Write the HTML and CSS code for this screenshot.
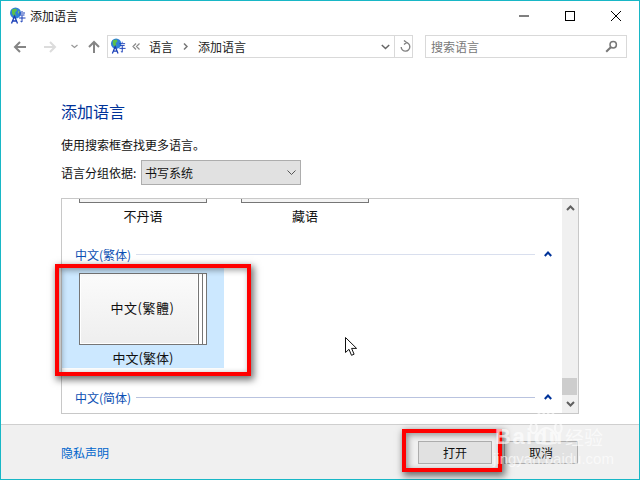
FILE: index.html
```html
<!DOCTYPE html>
<html lang="zh-CN">
<head>
<meta charset="utf-8">
<title>添加语言</title>
<link rel="stylesheet" href="styles.css">
</head>
<body>
<div class="window">
  <header class="titlebar">
    <svg class="globe" viewBox="0 0 18 18"><circle cx="6.500" cy="6" r="5.500" fill="#2f7fd8"/><path d="M3 2.500l4-1 1 2-2 2 1 3-2 1-2-3z" fill="#5cc04a"/><path d="M9.500 3.500c1 1 1.500 2 1.200 3.500L9 6z" fill="#7ccf5c"/><path d="M2.500 16.500L5.500 9 8.500 16.500M3.800 14H7.200" fill="none" stroke="#1a3fb8" stroke-width="1.300"/><path d="M10 6h6M13 4v1M10.500 8h5M13 8.500v6.500l-1.500-.7M10 11h6.500" fill="none" stroke="#1a3fb8" stroke-width="1"/></svg>
    <span class="title-text">添加语言</span>
    <div class="caption">
      <svg class="cap" viewBox="0 0 46 30"><path d="M18 15h10" stroke="#000" fill="none"/></svg>
      <svg class="cap" viewBox="0 0 46 30"><rect x="18.500" y="10.500" width="9" height="9" stroke="#000" fill="none"/></svg>
      <svg class="cap" viewBox="0 0 46 30"><path d="M18 10l10 10M28 10l-10 10" stroke="#000" fill="none"/></svg>
    </div>
  </header>

  <nav class="toolbar">
    <svg class="nav-ico back" viewBox="0 0 14 14"><path d="M13 7H2M7 2L2 7l5 5" fill="none" stroke="#858585" stroke-width="2"/></svg>
    <svg class="nav-ico fwd" viewBox="0 0 14 14"><path d="M1 7h11M7 2l5 5-5 5" fill="none" stroke="#dcdcdc" stroke-width="2"/></svg>
    <svg class="nav-drop" viewBox="0 0 7 5"><path d="M.5 1l3 2.500L6.500 1" fill="none" stroke="#999" stroke-width="1.300"/></svg>
    <svg class="nav-ico up" viewBox="0 0 14 14"><path d="M7 13V2M2 7l5-5 5 5" fill="none" stroke="#858585" stroke-width="2"/></svg>
    <div class="address">
      <svg class="globe globe-addr" viewBox="0 0 18 18"><circle cx="6.500" cy="6" r="5.500" fill="#2f7fd8"/><path d="M3 2.500l4-1 1 2-2 2 1 3-2 1-2-3z" fill="#5cc04a"/><path d="M2.500 16.500L5.500 9 8.500 16.500M3.800 14H7.200" fill="none" stroke="#1a3fb8" stroke-width="1.300"/><path d="M10 6h6M13 4v1M10.500 8h5M13 8.500v6.500l-1.500-.7M10 11h6.500" fill="none" stroke="#1a3fb8" stroke-width="1"/></svg>
      <svg class="crumb-more" viewBox="0 0 8 7"><path d="M4 .5L1 3.500l3 3M7.500 .5l-3 3 3 3" fill="none" stroke="#8a8a8a" stroke-width="1.200"/></svg>
      <span class="crumb">语言</span>
      <svg class="crumb-sep" viewBox="0 0 5 7"><path d="M1 .5l3 3-3 3" fill="none" stroke="#777" stroke-width="1.500"/></svg>
      <span class="crumb">添加语言</span>
      <svg class="addr-drop" viewBox="0 0 9 6"><path d="M.8 1l3.700 3.500L8.200 1" fill="none" stroke="#666" stroke-width="1.500"/></svg>
      <span class="refresh"><svg viewBox="0 0 12 13"><path d="M6.500 2.500a4.300 4.300 0 1 1-4.300 4.500M5 .5l2.500 2-2.500 2" fill="none" stroke="#808080" stroke-width="1.400"/></svg></span>
    </div>
    <div class="search">
      <span>搜索语言</span>
      <svg viewBox="0 0 13 13"><circle cx="8.200" cy="4.800" r="3.200" fill="none" stroke="#777" stroke-width="1.500"/><path d="M5.800 7.200L1.200 11.800" stroke="#777" stroke-width="2"/></svg>
    </div>
  </nav>

  <main class="content">
    <h1 class="heading">添加语言</h1>
    <p class="hint">使用搜索框查找更多语言。</p>
    <div class="group-row">
      <span>语言分组依据:</span>
      <div class="select">
        <span>书写系统</span>
        <svg viewBox="0 0 9 5"><path d="M.5 .5l4 4 4-4" fill="none" stroke="#555"/></svg>
      </div>
    </div>
    <div class="list">
      <div class="list-body">
        <div class="row-top">
          <div class="lang-cut">
            <div class="tile-stub"></div>
            <span>不丹语</span>
          </div>
          <div class="lang-cut">
            <div class="tile-stub"></div>
            <span>藏语</span>
          </div>
        </div>
        <div class="group-head first">
          <span>中文(繁体)</span><i class="rule light"></i>
          <svg viewBox="0 0 8 6"><path d="M.8 5L4 1.500 7.200 5" fill="none" stroke="#003399" stroke-width="2"/></svg>
        </div>
        <div class="selected">
          <div class="stack">
            <div class="card">中文(繁體)</div>
            <i class="sheet"></i><i class="sheet"></i>
          </div>
          <span class="sel-label">中文(繁体)</span>
        </div>
        <div class="group-head second">
          <span>中文(简体)</span><i class="rule"></i>
          <svg viewBox="0 0 8 6"><path d="M.8 5L4 1.500 7.200 5" fill="none" stroke="#003399" stroke-width="2"/></svg>
        </div>
      </div>
      <div class="scrollbar">
        <svg viewBox="0 0 9 6"><path d="M1 5l3.500-3.500L8 5" fill="none" stroke="#606060" stroke-width="2"/></svg>
        <div class="track"><div class="thumb"></div></div>
        <svg viewBox="0 0 9 6"><path d="M1 1l3.500 3.500L8 1" fill="none" stroke="#606060" stroke-width="2"/></svg>
      </div>
    </div>
  </main>

  <footer class="footer">
    <a class="privacy">隐私声明</a>
    <div class="buttons">
      <button class="btn hot">打开</button>
      <button class="btn">取消</button>
    </div>
  </footer>
</div>

<div class="mark mark-tile"></div>
<div class="mark mark-btn"></div>
<svg class="cursor" viewBox="0 0 13 20"><path d="M.5.500v15l3.500-3.200 2.500 6 2.600-1.100-2.500-5.800h5z" fill="#fff" stroke="#111"/></svg>
<div class="watermark">
  <svg class="paw" viewBox="0 0 40 40"><g fill="none" stroke="#fff" stroke-width="2.500"><ellipse cx="6" cy="20" rx="4" ry="6"/><ellipse cx="15" cy="7" rx="4" ry="6"/><ellipse cx="26" cy="7" rx="4" ry="6"/><ellipse cx="35" cy="20" rx="4" ry="6"/><path d="M10 34c0-8 6-14 11-14s12 6 12 14c0 6-22 6-23 0z"/></g></svg>
  <span class="wm-a">Baidu</span><span class="wm-b">经验</span>
  <span class="wm-c">jingyan.baidu.com</span>
</div>
</body>
</html>
```
FILE: styles.css
```css
* { box-sizing: border-box; }
html, body { margin: 0; padding: 0; }
body {
  width: 640px;
  height: 480px;
  overflow: hidden;
  position: relative;
  background: #fff;
  font-family: "Noto Sans CJK SC", "Liberation Sans", sans-serif;
  font-size: 12px;
  color: #111;
}
.window {
  width: 640px;
  height: 480px;
  border: 1px solid #18b7c6;
  display: flex;
  flex-direction: column;
}
.titlebar {
  height: 30px;
  flex: none;
  display: flex;
  align-items: center;
  padding-left: 8px;
}
.globe { width: 18px; height: 18px; flex: none; }
.title-text { margin-left: 3px; line-height: 30px; }
.caption { margin-left: auto; display: flex; }
.cap { width: 46px; height: 30px; display: block; }

.toolbar {
  height: 23px;
  margin-top: 4px;
  flex: none;
  display: flex;
  align-items: center;
  padding-left: 12px;
}
.nav-ico { width: 14px; height: 14px; flex: none; }
.fwd { margin-left: 16px; }
.nav-drop { width: 7px; height: 5px; margin-left: 14px; flex: none; }
.up { margin-left: 9px; }
.address {
  width: 306px;
  height: 23px;
  margin-left: 6px;
  border: 1px solid #d9d9d9;
  display: flex;
  align-items: center;
  padding-left: 2px;
}
.globe-addr { width: 17px; height: 17px; }
.crumb-more { width: 8px; height: 7px; margin-left: 5px; flex: none; }
.crumb { margin-left: 9px; color: #222; }
.crumb-sep { width: 5px; height: 7px; margin-left: 10px; flex: none; }
.crumb-sep + .crumb { margin-left: 10px; }
.addr-drop { width: 9px; height: 6px; margin-left: auto; flex: none; }
.refresh {
  width: 18px;
  height: 21px;
  margin-left: 4px;
  border-left: 1px solid #d9d9d9;
  display: flex;
  align-items: center;
  justify-content: center;
}
.refresh svg { width: 12px; height: 13px; margin-left: 3px; }
.search {
  width: 202px;
  height: 23px;
  margin-left: 12px;
  border: 1px solid #d9d9d9;
  display: flex;
  align-items: center;
  justify-content: space-between;
  padding: 0 8px 0 5px;
  color: #777;
}
.search svg { width: 13px; height: 13px; }

.content {
  flex: 1;
  padding: 0 60px;
  display: flex;
  flex-direction: column;
  min-height: 0;
}
.heading {
  margin: 41px 0 0;
  font-size: 16px;
  font-weight: 400;
  line-height: 24px;
  color: #003399;
}
.hint { margin: 13px 0 0; line-height: 18px; }
.group-row {
  display: flex;
  align-items: center;
  margin-top: 6px;
  height: 25px;
}
.group-row > span { width: 80px; flex: none; }
.select {
  width: 160px;
  height: 25px;
  background: #e1e1e1;
  border: 1px solid #adadad;
  display: flex;
  align-items: center;
  justify-content: space-between;
  padding: 0 3px;
}
.select svg { width: 9px; height: 5px; margin-right: 1px; }
.list {
  width: 518px;
  height: 216px;
  margin-top: 13px;
  border: 1px solid #c8c8c8;
  display: flex;
}
.list-body { flex: 1; min-width: 0; overflow: hidden; }
.row-top { display: flex; padding-left: 17px; }
.lang-cut { width: 128px; display: flex; flex-direction: column; align-items: center; }
.lang-cut:first-child { margin-right: 34px; }
.tile-stub {
  width: 100%;
  height: 4px;
  border: 1px solid #767676;
  border-top: 0;
  background: #f4f4f4;
}
.lang-cut span { margin-top: 4px; line-height: 18px; font-size: 13px; }
.group-head {
  display: flex;
  align-items: center;
  padding-left: 13px;
  color: #0b4fb3;
  height: 18px;
}
.group-head.first { margin-top: 20px; }
.group-head.second { margin-top: 20px; }
.rule { flex: 1; height: 1px; background: #b9c3df; margin-left: 5px; }
.rule.light { background: #d9dfee; }
.group-head svg { width: 8px; height: 6px; margin: 0 10px 0 9px; flex: none; }
.selected {
  width: 162px;
  height: 100px;
  margin-top: 5px;
  background: #cce8ff;
  padding: 5px 0 0 17px;
}
.stack { display: flex; height: 72px; width: 128px; }
.card {
  width: 120px;
  height: 72px;
  border: 1px solid #767676;
  background: linear-gradient(#fbfbfb, #eeeeee);
  display: flex;
  align-items: center;
  justify-content: center;
  box-shadow: inset 0 0 0 1px #fff;
  font-size: 13px;
  letter-spacing: .5px;
  padding: 0 0 3px 7px;
}
.sheet {
  width: 4px;
  height: 72px;
  background: #fff;
  border: 1px solid #767676;
  border-left: 0;
}
.sel-label {
  display: block;
  width: 128px;
  text-align: center;
  line-height: 18px;
  margin-top: 4px;
  font-size: 13px;
}
.scrollbar {
  width: 16px;
  flex: none;
  background: #f0f0f0;
  display: flex;
  flex-direction: column;
  align-items: center;
  padding: 6px 0;
}
.scrollbar svg { width: 9px; height: 6px; flex: none; }
.track { flex: 1; width: 100%; display: flex; align-items: flex-end; padding-bottom: 6px; }
.thumb { width: 15px; height: 17px; background: #cdcdcd; }

.footer {
  height: 55px;
  flex: none;
  margin-top: 10px;
  background: #f0f0f0;
  border-top: 1px solid #cfcfcf;
  display: flex;
  align-items: center;
  justify-content: space-between;
  padding: 0 61px 0 60px;
}
.privacy { color: #0066cc; }
.buttons { display: flex; gap: 12px; }
.btn {
  width: 74px;
  height: 23px;
  border: 1px solid #adadad;
  background: #e1e1e1;
  font: inherit;
  color: #111;
  padding: 0;
}

.mark {
  position: absolute;
  border: 4px solid #f00;
  box-shadow: 2px 3px 7px 1px rgba(0,0,0,.55), inset 2px 2px 6px rgba(0,0,0,.4);
}
.mark-tile { left: 55px; top: 264px; width: 196px; height: 112px; }
.mark-btn { left: 402px; top: 429px; width: 100px; height: 43px; }
.cursor { position: absolute; left: 345px; top: 337px; width: 13px; height: 20px; }

.watermark {
  position: absolute;
  left: 0;
  top: 0;
  width: 640px;
  height: 480px;
  color: #fff;
  pointer-events: none;
  opacity: .65;
}
.paw { position: absolute; left: 527px; top: 411px; width: 37px; height: 34px; }
.wm-a { position: absolute; left: 495px; top: 426px; font: 700 22px/22px "Liberation Sans", sans-serif; letter-spacing: 1.500px; }
.wm-b { position: absolute; left: 565px; top: 427px; font-size: 19px; line-height: 20px; }
.wm-c { position: absolute; left: 493px; top: 451px; font: 400 15px/15px "Liberation Sans", sans-serif; }
```
